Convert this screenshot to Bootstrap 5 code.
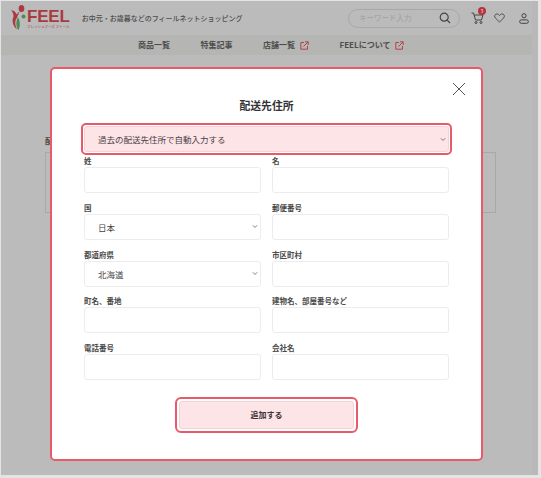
<!DOCTYPE html>
<html lang="ja">
<head>
<meta charset="UTF-8">
<title>配送先住所</title>
<link href="https://cdn.jsdelivr.net/npm/bootstrap@5.3.0/dist/css/bootstrap.min.css" rel="stylesheet">
<style>
html, body { height: 100%; }
body { background: #bbb; font-family: "Noto Sans CJK JP", "Noto Sans", sans-serif; color: #4a4a4a; overflow: hidden; border-style: solid; border-color: #e4e4e4; border-width: 1px 3px 3px 1px; }
.top-bar { height: 34px; padding: 0 9px 0 9px; }
.logo-word { font-family: "Liberation Sans", sans-serif; font-weight: 700; font-size: 17px; letter-spacing: -.2px; line-height: 14px; height: 14px; color: #a93a40; }
.logo-sub { font-size: 3.5px; line-height: 5px; height: 5px; color: #a93a40; white-space: nowrap; }
.logo-text { margin: 2px 0 0 -2px; }
.tagline { font-size: 7px; font-weight: 500; color: #4d4d4d; margin-left: 12px; }
.search-pill { width: 112px; height: 19px; border: 1px solid #a8a8a8; border-radius: 10px; padding: 0 8px 0 10px; font-size: 7.5px; color: #a0a0a0; margin-right: 11px; }
.cart-wrap { margin-right: 9px; width: 14px; }
.cart-count { position: absolute; left: 7px; top: -4px; width: 8px; height: 8px; line-height: 8px; font-size: 5px; text-align: center; color: #eee; background: #b5333d; border-radius: 50%; }
.heart-icon { margin-right: 14px; }
.nav-strip { height: 20px; width: 531px; background: #b5b5b4; font-size: 8px; font-weight: 700; color: #4d4d4d; padding-left: 137px; gap: 30.5px; }
.nav-strip span { display: inline-flex; align-items: center; gap: 5px; }
.scroll-strip { position: absolute; right: 0; top: 0; bottom: 0; width: 6px; background: #b8b8b8; }
.back-label { position: absolute; left: 44px; top: 134px; font-size: 8px; font-weight: 700; color: #4a4a4a; }
.back-box { position: absolute; left: 44px; top: 151px; width: 451px; height: 61px; border: 1px solid #a8a8a8; }
.sheet { position: absolute; left: 49px; top: 66px; width: 433px; height: 394px; background: #fff; border: 2px solid #e85a6a; border-radius: 5px; padding: 0 32px; }
.sheet-close { position: absolute; right: 15px; top: 13px; line-height: 0; }
.sheet-title { font-size: 10.8px; font-weight: 700; color: #333; text-align: center; margin: 29px 0 0; line-height: 14px; height: 14px; }
.pick-wrap { margin-top: 14px; height: 26px; outline: 2px solid #e85a6a; outline-offset: 1px; border-radius: 2px; }
.field-label { display: block; font-size: 7.5px; font-weight: 700; color: #4a4a4a; line-height: 10px; margin: 0 0 1px; height: 10px; white-space: nowrap; }
.form-grid { display: grid; grid-template-columns: 177px 177px; column-gap: 11px; row-gap: 9.75px; margin-top: 4px; }
.form-control.field-box, .form-select.field-box { height: 26px; min-height: 26px; padding: 0 0 0 13px; font-size: 8.5px; line-height: 24px; color: #444; border: 1px solid #ececec; border-radius: 3px; background-size: 6px 5px; background-position: right 2px center; box-shadow: none; }
.form-select.pick-select { height: 26px; padding: 0 0 0 13px; font-size: 8.5px; color: #4a4045; background-color: #fde4e6; border: 1px solid #f3d3d7; border-radius: 3px; background-size: 6px 5px; background-position: right 2px center; }
.add-wrap { width: 175px; height: 28px; margin: 21px auto 0; outline: 2px solid #e85a6a; outline-offset: 2px; border-radius: 2px; }
.btn.add-btn { display: block; width: 100%; height: 100%; padding: 0; font-size: 8px; font-weight: 700; color: #3d3336; background: #fde4e6; border: 1px solid #f3d3d7; border-radius: 3px; }
</style>
</head>
<body class="position-relative">
<div class="scroll-strip"></div>
<header class="position-relative">
  <div class="top-bar d-flex align-items-center">
    <div class="d-flex align-items-center">
      <svg width="19" height="26" viewBox="9 4 19 26">
        <path d="M10 9.500C12.500 9 14.500 10.500 15.500 13.500C16.500 12 17.500 11 18.500 10.500C17.500 13 16.500 15 16 17C14 19 13.500 23 16 28.500C12 25 10.500 20 12.500 15.500C12.500 12.500 11.500 10.500 10 9.500Z" fill="#a93a40"/>
        <ellipse cx="20.500" cy="7.500" rx="2.800" ry="3.500" fill="#a93a40"/>
        <circle cx="22.500" cy="15.500" r="2" fill="#4f8a55"/>
        <path d="M17 16.500C19 19 19.500 25 17.500 29C15 27 14.500 20 17 16.500Z" fill="#4f8a55"/>
      </svg>
      <div class="logo-text">
        <div class="logo-word">FEEL</div>
        <div class="logo-sub">フレッシュフーズ フィール</div>
      </div>
      <div class="tagline">お中元・お歳暮などのフィールネットショッピング</div>
    </div>
    <div class="ms-auto d-flex align-items-center">
      <div class="search-pill d-flex align-items-center justify-content-between">
        <span>キーワード入力</span>
        <svg width="12" height="12" viewBox="0 0 12 12" fill="none" stroke="#444" stroke-width="1.200"><circle cx="5.200" cy="5.200" r="4"/><path d="M8.200 8.200 11 11"/></svg>
      </div>
      <div class="cart-wrap position-relative d-flex">
        <svg width="13" height="14" viewBox="0 0 13 14" fill="none" stroke="#444" stroke-width="1"><path d="M.5 2h2l2 7h6l1.500-5H3.200"/><circle cx="5" cy="11.500" r="1"/><circle cx="10" cy="11.500" r="1"/></svg>
        <span class="cart-count">3</span>
      </div>
      <svg class="heart-icon" width="11" height="10" viewBox="0 0 12 11" fill="none" stroke="#444" stroke-width="1"><path d="M6 10 1.500 5.500C0 4 .5 1 3.200 1 4.500 1 5.500 2 6 2.800 6.500 2 7.500 1 8.800 1c2.700 0 3.200 3 1.700 4.500z"/></svg>
      <svg width="10" height="11" viewBox="0 0 11 12" fill="none" stroke="#444" stroke-width="1.100"><circle cx="5.500" cy="3" r="2.300"/><rect x=".7" y="7.500" width="9.600" height="3.800" rx="1.900"/></svg>
    </div>
  </div>
  <nav class="nav-strip d-flex align-items-center">
    <span>商品一覧</span>
    <span>特集記事</span>
    <span>店舗一覧
      <svg width="9" height="9" viewBox="0 0 9 9" fill="none" stroke="#b5434b" stroke-width="1"><path d="M4 1.500H.8v6.700h6.700V5M3.500 5.500 8 1M5 .8h3.200V4"/></svg>
    </span>
    <span>FEELについて
      <svg width="9" height="9" viewBox="0 0 9 9" fill="none" stroke="#b5434b" stroke-width="1"><path d="M4 1.500H.8v6.700h6.700V5M3.500 5.500 8 1M5 .8h3.200V4"/></svg>
    </span>
  </nav>
</header>
<div class="back-label">配</div>
<div class="back-box"></div>
<section class="sheet">
  <div class="sheet-close">
    <svg width="14" height="14" viewBox="0 0 14 14" fill="none" stroke="#555" stroke-width="1"><path d="M1 1l12 12M13 1 1 13"/></svg>
  </div>
  <h2 class="sheet-title">配送先住所</h2>
  <div class="pick-wrap">
    <select class="form-select pick-select"><option>過去の配送先住所で自動入力する</option></select>
  </div>
  <div class="form-grid">
    <div><label class="field-label">姓</label><input class="form-control field-box"></div>
    <div><label class="field-label">名</label><input class="form-control field-box"></div>
    <div><label class="field-label">国</label><select class="form-select field-box"><option>日本</option></select></div>
    <div><label class="field-label">郵便番号</label><input class="form-control field-box"></div>
    <div><label class="field-label">都道府県</label><select class="form-select field-box"><option>北海道</option></select></div>
    <div><label class="field-label">市区町村</label><input class="form-control field-box"></div>
    <div><label class="field-label">町名、番地</label><input class="form-control field-box"></div>
    <div><label class="field-label">建物名、部屋番号など</label><input class="form-control field-box"></div>
    <div><label class="field-label">電話番号</label><input class="form-control field-box"></div>
    <div><label class="field-label">会社名</label><input class="form-control field-box"></div>
  </div>
  <div class="add-wrap"><button type="button" class="btn add-btn">追加する</button></div>
</section>
</body>
</html>
